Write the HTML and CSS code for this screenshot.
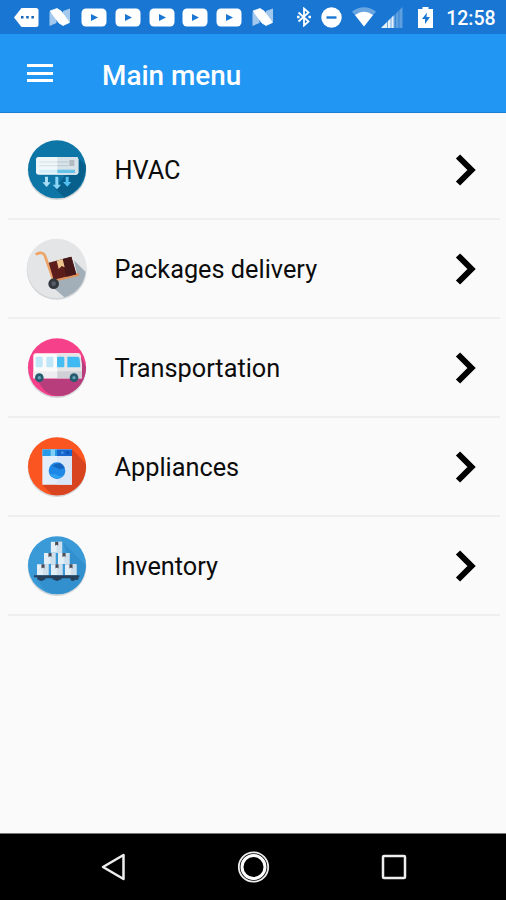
FILE: index.html
```
<!DOCTYPE html>
<html lang="en">
<head>
<meta charset="utf-8">
<title>Main menu</title>
<link rel="stylesheet" href="styles.css">
</head>
<body>
<svg class="defs" aria-hidden="true">
  <defs>
    <symbol id="nougat" viewBox="0 0 22 18">
      <path d="M.5 4l7 3v8l-7 3zM14 3l7-2.500V14l-7-3z" fill="#fff" opacity=".6"/>
      <path d="M1 3L8 .5l4 2.500L20.500 14.500 14 17.500l-4-2.500z" fill="#fff" stroke="#fff" stroke-width=".8" stroke-linejoin="round"/>
    </symbol>
    <symbol id="video" viewBox="0 0 26 19">
      <rect x=".5" y=".5" width="25" height="18" rx="4.5" fill="#fff"/>
      <path d="M10 6l7 3.5-7 3.5z" fill="#1976d2"/>
    </symbol>
    <symbol id="chevron" viewBox="0 0 24 34">
      <path d="M4 3.500L17.500 17 4 30.500" fill="none" stroke="#000" stroke-width="6"/>
    </symbol>
    <symbol id="box" viewBox="0 0 34 34">
      <path d="M0 1h34v32H0z" fill="#e3eef7"/>
      <path d="M17 1h17v32H17z" fill="#cfdfec"/>
      <path d="M13 1h9v12l-4-3-5 3z" fill="#4c4b55"/>
    </symbol>
  </defs>
</svg>
<header>
  <div class="status">
    <svg class="more" viewBox="0 0 25 19"><path d="M7.500 0H22q2.500 0 2.500 2.500v14Q24.500 19 22 19H7.500L0 9.500z" fill="#fff"/><path d="M7 8h2.500v2.500H7zM12.200 8h2.500v2.500h-2.500zM17.400 8h2.500v2.500h-2.500z" fill="#1565b5"/></svg>
    <svg class="nougat"><use href="#nougat"/></svg>
    <div class="videos">
      <svg><use href="#video"/></svg>
      <svg><use href="#video"/></svg>
      <svg><use href="#video"/></svg>
      <svg><use href="#video"/></svg>
      <svg><use href="#video"/></svg>
    </div>
    <svg class="nougat"><use href="#nougat"/></svg>
    <svg class="bluetooth" viewBox="0 0 14 20"><path d="M1.500 5.500l10 9L7 18.500v-17l4.500 4-10 9" fill="none" stroke="#fff" stroke-width="1.800"/><path d="M0 8.700h2.600v2.600H0zM11.400 8.700H14v2.600h-2.600z" fill="#fff"/></svg>
    <svg class="dnd" viewBox="0 0 21 21"><circle cx="10.500" cy="10.500" r="10.200" fill="#fff"/><path d="M5.500 9.300h10v2.400h-10z" fill="#1976d2"/></svg>
    <svg class="wifi" viewBox="0 0 24 20"><path d="M0 4.500Q12-4 24 4.500L12 19.500z" fill="#fff" opacity=".35"/><path d="M3 8Q12 1.500 21 8l-9 11.500z" fill="#fff"/></svg>
    <svg class="signal" viewBox="0 0 22 21"><path d="M0 21L21.500 0v21z" fill="#fff" opacity=".3"/><path d="M0 21L12.500 8.500V21z" fill="#fff" opacity=".85"/><path d="M6.500 13v8M10 9v12M14.500 6v15M18 3v18" stroke="#1976d2" stroke-width=".8" opacity=".7"/></svg>
    <svg class="battery" viewBox="0 0 15 21"><path d="M4.500 0h6v2H15v19H0V2h4.500z" fill="#fff"/><path d="M9 5.500L4 12h3v5l5-7H8.500z" fill="#1976d2"/></svg>
    <span class="clock">12:58</span>
  </div>
  <div class="toolbar">
    <div class="burger"><i></i><i></i><i></i></div>
    <h1>Main menu</h1>
  </div>
</header>
<main>
  <div class="row">
    <svg class="icon" viewBox="0 0 240 240">
      <circle class="shade" cx="123" cy="122" r="88"/>
      <circle cx="123" cy="118" r="87" fill="#0d76a6"/>
      <path d="M188 85l22 22q-4 70-65 96l-27-27 30-42 40-2z" fill="#075f8c"/>
      <rect x="60" y="81" width="127" height="53" rx="7" fill="#f0f7fa"/>
      <path d="M124 81h56q7 0 7 7v39q0 7-7 7h-56z" fill="#d8e3e9"/>
      <path d="M70 96h53M70 107h53" stroke="#d7dfe3" stroke-width="3"/>
      <path d="M124 96h34M124 107h34" stroke="#b9c8d0" stroke-width="3"/>
      <path d="M160 90h15v18h-15z" fill="#b3bbc1"/>
      <path d="M70 119h53v10H70z" fill="#d3effa"/><path d="M124 119h53v10h-53z" fill="#65c3e8"/>
      <path d="M87 140h9v17h8l-12 14-13-14h8z" fill="#a9ddf5"/>
      <path d="M118 140h9v24h8l-12 14-13-14h8z" fill="#8bd6f7"/>
      <path d="M149 140h9v16h8l-12 14-13-14h8z" fill="#52bff0"/>
    </svg>
    <span>HVAC</span>
    <svg class="chev"><use href="#chevron"/></svg>
  </div>
  <div class="row">
    <svg class="icon" viewBox="0 0 240 240">
      <circle class="shade" cx="122" cy="122" r="90"/>
      <circle cx="122" cy="118" r="89" fill="#e3e5e6"/>
      <path d="M174 94l35 35q-9 58-64 76l-38-33 20-26 56-12z" fill="#a2afb8"/>
      <path d="M62 75q19-9 25 6l25 71" fill="none" stroke="#eda365" stroke-width="8" stroke-linecap="round"/>
      <path d="M114 154l75-18" stroke="#df935d" stroke-width="8"/>
      <path d="M98 101l68-18 15 53-68 16z" fill="#5c1d1b"/>
      <path d="M137 91l29-8 15 53-29 7z" fill="#47181a"/>
      <path d="M122 95l18-5 6 25-9-4-9 9z" fill="#ecc28d"/>
      <circle cx="113" cy="164" r="16" fill="#33383f"/><circle cx="113" cy="164" r="7" fill="#555d66"/>
    </svg>
    <span>Packages delivery</span>
    <svg class="chev"><use href="#chevron"/></svg>
  </div>
  <div class="row">
    <svg class="icon" viewBox="0 0 240 240">
      <circle class="shade" cx="123" cy="122" r="88"/>
      <circle cx="123" cy="118" r="87" fill="#f7408a"/>
      <path d="M194 84l16 34q-2 55-50 79-42 17-74-9l-26-34 134-4z" fill="#b83d7d"/>
      <path d="M60 76h126q6 0 8 7l4 35v33H52V84q0-8 8-8z" fill="#fafafa"/>
      <path d="M124 76h62q6 0 8 7l4 35v33h-74z" fill="#e5e5e8"/>
      <path d="M52 130h72v21H52z" fill="#eeeef0"/><path d="M124 130h74v21h-74z" fill="#cfd0d5"/>
      <rect x="59" y="86" width="21" height="32" rx="4" fill="#bfe7f7"/><rect x="91" y="86" width="21" height="32" rx="4" fill="#bfe7f7"/>
      <rect x="123" y="86" width="22" height="32" rx="3" fill="#45bdf0"/><path d="M154 86h31q5 0 6 7l2 25h-39z" fill="#3fb9f2"/>
      <g fill="#275b70"><circle cx="70" cy="149" r="13"/><circle cx="174" cy="149" r="13"/></g>
      <g fill="#6aa3b5"><circle cx="70" cy="149" r="5"/><circle cx="174" cy="149" r="5"/></g>
    </svg>
    <span>Transportation</span>
    <svg class="chev"><use href="#chevron"/></svg>
  </div>
  <div class="row">
    <svg class="icon" viewBox="0 0 240 240">
      <circle class="shade" cx="123" cy="122" r="88"/>
      <circle cx="123" cy="118" r="87" fill="#fb5521"/>
      <path d="M168 67l42 44q2 66-60 90-20 7-42 2l-29-30 89-2z" fill="#d7441f"/>
      <path d="M79 67h89v106H79z" fill="#e4eefa"/>
      <path d="M123 67h45v106h-45z" fill="#d8e6f7"/>
      <path d="M79 67h44v20H79z" fill="#279be8"/><path d="M123 67h45v20h-45z" fill="#1767cf"/>
      <path d="M104 67h13v20h-13z" fill="#80cdf6"/><circle cx="139" cy="77" r="4" fill="#4795e5"/><circle cx="155" cy="77" r="4" fill="#0e4da8"/>
      <circle cx="123" cy="131" r="25" fill="#1f87e6"/><path d="M108 118q12-11 24-9 11 5 14 14-14 7-23 0-7-5-15-5z" fill="#1565c0"/><path d="M101 142q16-3 23 3 8 4 18 0-7 9-19 9-15-1-22-12z" fill="#2fa3f2"/>
    </svg>
    <span>Appliances</span>
    <svg class="chev"><use href="#chevron"/></svg>
  </div>
  <div class="row">
    <svg class="icon" viewBox="0 0 240 240">
      <circle class="shade" cx="123" cy="122" r="88"/>
      <circle cx="123" cy="118" r="87" fill="#3a9ad7"/>
      <path d="M140 48l69 70q-3 55-47 78-43 20-82-9l-18-32 113-5z" fill="#3190cd"/>
      <use href="#box" x="104" y="46" width="35" height="35"/>
      <use href="#box" x="84" y="80" width="35" height="35"/><use href="#box" x="126" y="80" width="35" height="35"/>
      <use href="#box" x="63" y="114" width="35" height="35"/><use href="#box" x="105" y="114" width="35" height="35"/><use href="#box" x="147" y="114" width="35" height="35"/>
      <path d="M54 148h136v6h-3v7h-15v-4h-36v4h-26v-4H88v4H64v-7H54z" fill="#263f5a"/>
      <g fill="#263f5a"><circle cx="76" cy="158" r="7"/><circle cx="123" cy="158" r="7"/><circle cx="170" cy="158" r="7"/></g>
    </svg>
    <span>Inventory</span>
    <svg class="chev"><use href="#chevron"/></svg>
  </div>
</main>
<nav>
  <svg viewBox="0 0 34 34"><path d="M6 17L26.500 5v24z" fill="none" stroke="#eee" stroke-width="2.500" stroke-linejoin="round"/></svg>
  <svg viewBox="0 0 34 34"><circle cx="16.500" cy="17" r="14.700" fill="none" stroke="#eee" stroke-width="1.800"/><circle cx="16.500" cy="17" r="11.500" fill="none" stroke="#fff" stroke-width="3"/></svg>
  <svg viewBox="0 0 34 34"><rect x="6" y="6" width="22" height="22" rx="1" fill="none" stroke="#eee" stroke-width="2.500"/></svg>
</nav>
</body>
</html>
```
FILE: styles.css
```
* { box-sizing: border-box; }
body {
  margin: 0;
  height: 900px;
  display: flex;
  flex-direction: column;
  background: #fafafa;
  color: #0c0c0c;
  font-family: Roboto, "Liberation Sans", sans-serif;
  overflow: hidden;
}
svg { display: block; flex: none; }
.defs { width: 0; height: 0; position: absolute; }
.status {
  height: 34px;
  padding-left: 14px;
  display: flex;
  align-items: center;
  background: #1976d2;
}
.more { width: 25px; height: 19px; margin-right: 10px; }
.nougat { width: 22px; height: 18px; }
.videos { display: flex; gap: 7.8px; margin: 0 10px; }
.videos svg { width: 26px; height: 19px; }
.bluetooth { width: 14px; height: 20px; margin-left: 23px; }
.dnd { width: 21px; height: 21px; margin-left: 10px; }
.wifi { width: 24px; height: 20px; margin-left: 10px; }
.signal { width: 22px; height: 21px; margin-left: 5px; }
.battery { width: 15px; height: 21px; margin-left: 15px; }
.clock {
  margin: 3px 0 0 13px;
  color: #fff;
  font-size: 19.5px;
  font-weight: 500;
  line-height: 24px;
}
.toolbar {
  height: 79px;
  padding-left: 27px;
  display: flex;
  align-items: center;
  background: #2196f3;
  border-bottom: 1px solid #1c80d2;
}
.burger {
  width: 26px;
  display: flex;
  flex-direction: column;
  gap: 4.5px;
}
.burger i { height: 3px; background: #fff; }
h1 {
  margin: 5px 0 0 49px;
  color: #fff;
  font-size: 27.9px;
  font-weight: 500;
  line-height: 32px;
}
main { flex: 1; padding: 8px 6px 0 8px; }
.row {
  height: 99px;
  padding: 0 22px 0 8px;
  display: flex;
  align-items: center;
  border-bottom: 2px solid #efefef;
}
.icon { width: 80px; height: 80px; }
.shade { fill: #d3d6d8; }
.row span {
  flex: 1;
  margin: 2px 0 0 18.500px;
  font-size: 25.3px;
  line-height: 32px;
}
.chev { width: 24px; height: 34px; }
nav {
  height: 67px;
  padding: 0 95px 0 97px;
  display: flex;
  align-items: center;
  justify-content: space-between;
  background: #000;
  border-top: 1px solid #777;
}
nav svg { width: 34px; height: 34px; }
```
